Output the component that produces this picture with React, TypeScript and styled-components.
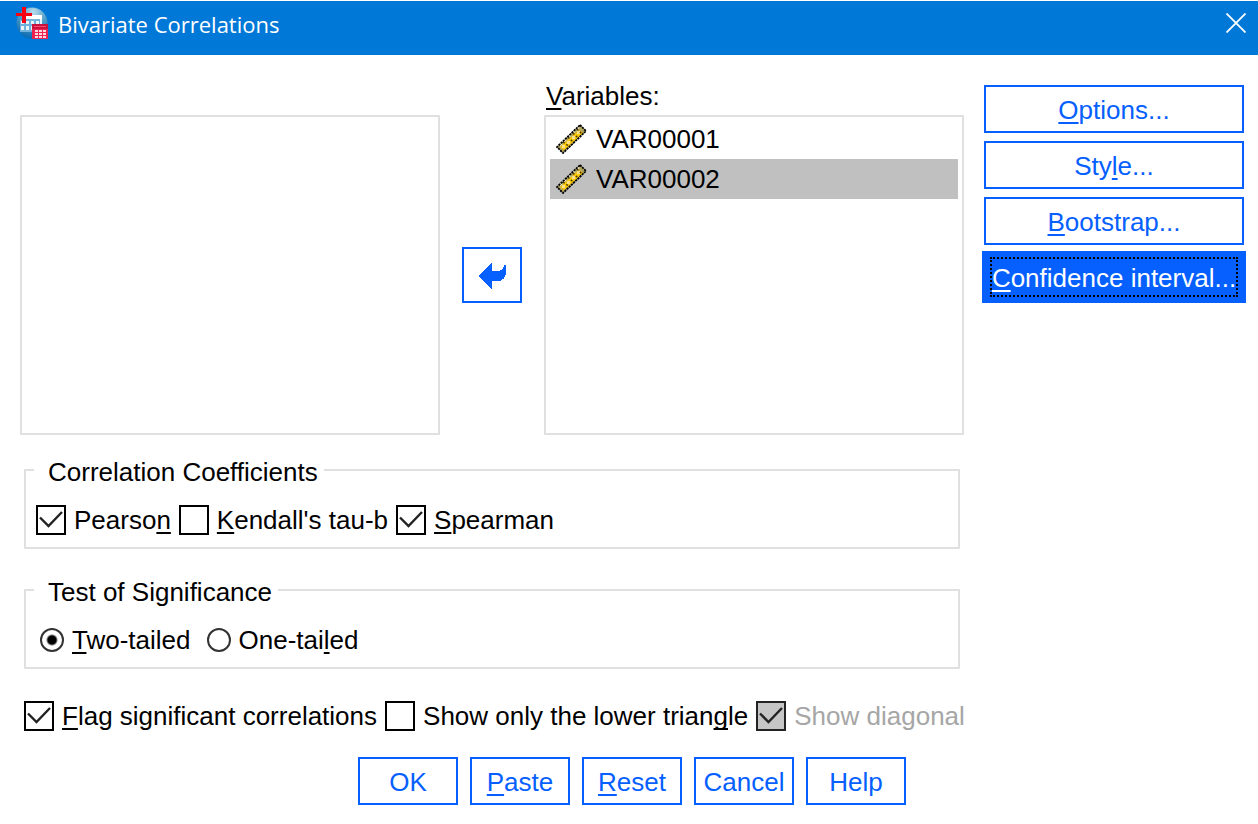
import React, { ReactNode } from "react";
import styled, { createGlobalStyle, css } from "styled-components";

const blue = "#0560ff";
const line = "#e0e0e0";

const GlobalStyle = createGlobalStyle`
  *, *::before, *::after { box-sizing: border-box; }
  body {
    margin: 0;
    background: #fff;
    color: #000;
    font-family: "Liberation Sans", Arial, sans-serif;
    font-size: 26px;
    line-height: 30px;
  }
`;

const Dialog = styled.main`
  padding-top: 1px;
`;

const TitleBar = styled.header`
  display: flex;
  align-items: center;
  gap: 10px;
  height: 54px;
  padding: 0 12px 10px 16px;
  background: #0078d7;
  color: #fff;
`;

const Title = styled.h1`
  flex: 1;
  margin: 0;
  padding-top: 2px;
  font-family: "Open Sans", "Noto Sans", sans-serif;
  font-size: 22px;
  font-weight: 400;
  line-height: 32px;
`;

const CloseButton = styled.button`
  display: flex;
  padding: 0;
  border: 0;
  background: none;
  color: inherit;
`;

const Body = styled.div`
  display: flex;
  flex-direction: column;
  padding: 26px 14px 18px 20px;
`;

const Columns = styled.div`
  display: flex;
  align-items: flex-start;
  gap: 20px;
`;

const Content = styled.div`
  flex: 1;
  min-width: 0;
`;

const Picker = styled.div`
  display: grid;
  grid-template-columns: 1fr 60px 1fr;
  column-gap: 22px;
  align-items: center;
`;

const ListLabel = styled.div`
  grid-column: 3;
  padding-left: 2px;
  margin-bottom: 4px;
`;

const List = styled.ul`
  height: 320px;
  margin: 0;
  padding: 2px 4px;
  border: 2px solid ${line};
  list-style: none;
`;

const ListItem = styled.li<{ $selected?: boolean }>`
  display: flex;
  align-items: center;
  gap: 8px;
  height: 40px;
  padding: 0 6px;
  background: ${(p) => (p.$selected ? "#c0c0c0" : "transparent")};
`;

const Button = styled.button<{ $primary?: boolean }>`
  display: flex;
  align-items: center;
  justify-content: center;
  height: 48px;
  padding: 2px 0 0;
  border: 2px solid ${blue};
  background: #fff;
  color: ${blue};
  font: inherit;
  white-space: nowrap;
  ${(p) =>
    p.$primary &&
    css`
      position: relative;
      background: ${blue};
      color: #fff;
      box-shadow: 0 0 0 2px ${blue};

      &::after {
        content: "";
        position: absolute;
        inset: 2px 4px;
        border: 2px dotted #000;
      }
    `}
`;

const MoveButton = styled(Button)`
  height: 56px;
`;

const SideButtons = styled.div`
  display: flex;
  flex-direction: column;
  gap: 8px;
  width: 260px;
  padding-top: 4px;
`;

const Group = styled.fieldset`
  min-width: 0;
  margin: 18px 4px 0;
  padding: 18px 10px 12px;
  border: 2px solid ${line};

  & + & {
    margin-top: 24px;
  }
`;

const Legend = styled.legend`
  margin-left: -2px;
  padding: 4px 6px 0 14px;
`;

const Options = styled.div<{ $gap?: number; $indent?: number }>`
  display: flex;
  gap: ${(p) => p.$gap ?? 8}px;
  padding-left: ${(p) => p.$indent ?? 0}px;
`;

const OutputOptions = styled(Options)`
  margin-top: 32px;
`;

const Choice = styled.label<{ $disabled?: boolean }>`
  display: flex;
  align-items: center;
  gap: 8px;
  white-space: nowrap;
  color: ${(p) => (p.$disabled ? "#a6a6a6" : "inherit")};
`;

const Mark = styled.span`
  display: grid;

  & > * {
    grid-area: 1 / 1;
  }
  & > svg {
    pointer-events: none;
    visibility: hidden;
  }
  & > input:checked + svg {
    visibility: visible;
  }
`;

const CheckInput = styled.input`
  appearance: none;
  width: 30px;
  height: 30px;
  margin: 0;
  border: 2px solid #000;
  background: #fff;

  &:disabled {
    border-color: #222;
    background: #c6c6c6;
  }
`;

const RadioInput = styled.input`
  appearance: none;
  width: 24px;
  height: 24px;
  margin: 0;
  border: 2px solid #333;
  border-radius: 50%;
  background: #fff;

  &:checked {
    background: radial-gradient(circle, #000 4px, #fff 6px);
  }
`;

const Actions = styled.footer`
  display: flex;
  justify-content: center;
  gap: 12px;
  margin-top: 26px;
`;

const ActionButton = styled(Button)`
  width: 100px;
`;

const Key = styled.span`
  text-decoration: underline;
  text-decoration-thickness: 2px;
  text-underline-offset: 3px;
  text-decoration-skip-ink: none;
`;

const AppIcon = () => (
  <svg width="32" height="32" viewBox="0 0 32 32" aria-hidden="true">
    <defs>
      <radialGradient id="globe" cx="55%" cy="15%" r="85%">
        <stop offset="0" stopColor="#b9dcec" />
        <stop offset="0.5" stopColor="#4f9fc8" />
        <stop offset="1" stopColor="#0b68b0" />
      </radialGradient>
    </defs>
    <circle cx="16" cy="16" r="15.5" fill="url(#globe)" />
    <path d="M4 13h22v12H4z" fill="#6fb2dc" />
    <path d="M10 8h16v4H10z" fill="#fff" />
    <path d="M5 14h3v3H5zM10 14h3v3h-3zM15 14h3v3h-3zM20 14h3v3h-3zM24 12h2v5h-2zM5 19h3v4H5zM10 19h3v4h-3zM15 19h2v4h-2z" fill="#e8f4fa" />
    <path d="M16 17h16v15H16z" fill="#f0234f" />
    <path d="M16 17h16v5H16z" fill="#c8143c" />
    <path d="M18 19h12v1H18z" fill="#ff4a70" />
    <path d="M19 23h3v2h-3zM23 23h3v2h-3zM27 23h3v2h-3zM19 26h3v2h-3zM23 26h3v2h-3zM27 26h3v2h-3zM19 29h3v2h-3zM23 29h3v2h-3zM27 29h3v2h-3z" fill="#ffd9e2" />
    <path d="M6 0h4v6h6v3h-6v7H6V9H0V6h6z" fill="#f80010" />
  </svg>
);

const CloseIcon = () => (
  <svg width="20" height="20" viewBox="0 0 20 20" aria-hidden="true">
    <path d="M0.5 0.5L19.5 19.5M19.5 0.5L0.5 19.5" stroke="currentColor" strokeWidth="1.8" />
  </svg>
);

const RulerIcon = () => (
  <svg width="32" height="30" viewBox="0 0 32 30" aria-hidden="true">
    <path d="M24 1L30 7L7 29L1 23Z" fill="#b3a65c" />
    <path d="M23 6L27 9L8 26L4 23Z" fill="#ffc800" />
    <path d="M21 7h3v3h-3zM16 12h3v3h-3zM11 17h3v3h-3zM6 21h3v3H6z" fill="#ffe08a" />
    <path d="M23 3L3 22" stroke="#f4f0cc" strokeWidth="2" strokeDasharray="3 3" />
    <path d="M7 18l7 5M12 13l6 6M17 9l6 6M21 5l5 5" stroke="#4a3c00" strokeWidth="1.4" strokeDasharray="2 2" />
    <path d="M24 1L30 7L7 29L1 23Z" fill="none" stroke="#000" strokeWidth="1.8" strokeDasharray="2.2 0.8" />
  </svg>
);

const ArrowIcon = () => (
  <svg width="28" height="26" viewBox="0 0 28 26" aria-hidden="true">
    <path d="M0 13L14 0V8H20Q26 7 26 2H28V10Q27 17 21 18H14V26Z" fill="currentColor" shapeRendering="crispEdges" />
  </svg>
);

type ChoiceProps = { children: ReactNode; checked?: boolean; disabled?: boolean };

const Check = ({ children, checked, disabled }: ChoiceProps) => (
  <Choice $disabled={disabled}>
    <Mark>
      <CheckInput type="checkbox" defaultChecked={checked} disabled={disabled} />
      <svg width="30" height="30" viewBox="0 0 30 30" aria-hidden="true">
        <path d="M4 12.5L12.5 21L26 7" fill="none" stroke="#222" strokeWidth="2.4" />
      </svg>
    </Mark>
    <span>{children}</span>
  </Choice>
);

const Radio = ({ children, checked }: ChoiceProps) => (
  <Choice>
    <RadioInput type="radio" name="significance" defaultChecked={checked} />
    <span>{children}</span>
  </Choice>
);

export default function App() {
  return (
    <Dialog>
      <GlobalStyle />
      <TitleBar>
        <AppIcon />
        <Title>Bivariate Correlations</Title>
        <CloseButton type="button" aria-label="Close">
          <CloseIcon />
        </CloseButton>
      </TitleBar>
      <Body>
        <Columns>
          <Content>
            <Picker>
              <ListLabel id="variables-label">
                <Key>V</Key>ariables:
              </ListLabel>
              <List role="listbox" aria-label="Available variables" />
              <MoveButton type="button" aria-label="Move variable back">
                <ArrowIcon />
              </MoveButton>
              <List role="listbox" aria-labelledby="variables-label">
                <ListItem role="option" aria-selected="false">
                  <RulerIcon />
                  VAR00001
                </ListItem>
                <ListItem role="option" aria-selected="true" $selected>
                  <RulerIcon />
                  VAR00002
                </ListItem>
              </List>
            </Picker>
            <Group>
              <Legend>Correlation Coefficients</Legend>
              <Options>
                <Check checked>Pearso<Key>n</Key></Check>
                <Check><Key>K</Key>endall's tau-b</Check>
                <Check checked><Key>S</Key>pearman</Check>
              </Options>
            </Group>
            <Group>
              <Legend>Test of Significance</Legend>
              <Options $gap={16} $indent={4}>
                <Radio checked><Key>T</Key>wo-tailed</Radio>
                <Radio>One-tai<Key>l</Key>ed</Radio>
              </Options>
            </Group>
            <OutputOptions $indent={4}>
              <Check checked><Key>F</Key>lag significant correlations</Check>
              <Check>Show only the lower trian<Key>g</Key>le</Check>
              <Check checked disabled>Show diagonal</Check>
            </OutputOptions>
          </Content>
          <SideButtons>
            <Button type="button"><span><Key>O</Key>ptions...</span></Button>
            <Button type="button"><span>Sty<Key>l</Key>e...</span></Button>
            <Button type="button"><span><Key>B</Key>ootstrap...</span></Button>
            <Button type="button" $primary><span><Key>C</Key>onfidence interval...</span></Button>
          </SideButtons>
        </Columns>
        <Actions>
          <ActionButton type="button">OK</ActionButton>
          <ActionButton type="button"><span><Key>P</Key>aste</span></ActionButton>
          <ActionButton type="button"><span><Key>R</Key>eset</span></ActionButton>
          <ActionButton type="button">Cancel</ActionButton>
          <ActionButton type="button">Help</ActionButton>
        </Actions>
      </Body>
    </Dialog>
  );
}
